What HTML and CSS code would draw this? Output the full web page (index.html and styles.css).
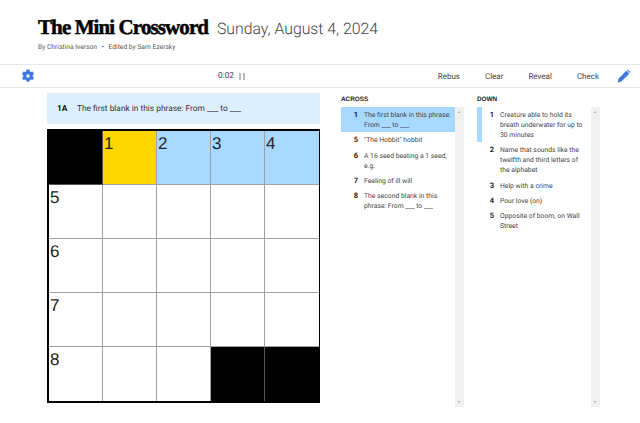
FILE: index.html
```html
<!DOCTYPE html>
<html lang="en">
<head>
    <meta charset="UTF-8">
    <title>The Mini Crossword</title>
    <link rel="stylesheet" href="styles.css">
</head>
<body>
    <header class="page-head">
        <div class="title-row">
            <h1>The Mini Crossword</h1>
            <span class="date">Sunday, August 4, 2024</span>
        </div>
        <div class="byline">By Christina Iverson <span class="dot">&bull;</span> Edited by Sam Ezersky</div>
    </header>

    <div class="toolbar">
        <svg class="gear" viewBox="0 0 24 24" width="14" height="14">
            <path fill="#3f78e0" fill-rule="evenodd" d="M9.500 1h5l.6 3.100 1.700 1 3-1 2.500 4.300-2.400 2.100v1.900l2.400 2.100-2.500 4.300-3-1-1.700 1-.6 3.100h-5l-.6-3.100-1.700-1-3 1L1.700 15.500l2.400-2.100v-1.900L1.700 8.400 4.200 4.100l3 1 1.700-1zM12 15a3 3 0 1 0 0-6 3 3 0 0 0 0 6z"/>
        </svg>
        <div class="timer">0:02 <span class="pause"></span></div>
        <nav class="tools">
            <a>Rebus</a>
            <a>Clear</a>
            <a>Reveal</a>
            <a>Check</a>
        </nav>
        <svg class="pencil" viewBox="0 0 24 24" width="14" height="14">
            <path fill="#3f78e0" d="M1 23l1.500-6.500L16 3l5 5L7.500 21.500zM17.500 1.500a1.500 1.500 0 0 1 2 0l3 3a1.500 1.500 0 0 1 0 2L22 7l-5-5z"/>
        </svg>
    </div>

    <main class="game">
        <section class="board">
            <div class="clue-bar"><b>1A</b><span>The first blank in this phrase: From ___ to ___</span></div>
            <div class="grid">
                <div class="cell black"></div>
                <div class="cell yellow">1</div>
                <div class="cell blue">2</div>
                <div class="cell blue">3</div>
                <div class="cell blue">4</div>
                <div class="cell">5</div>
                <div class="cell"></div>
                <div class="cell"></div>
                <div class="cell"></div>
                <div class="cell"></div>
                <div class="cell">6</div>
                <div class="cell"></div>
                <div class="cell"></div>
                <div class="cell"></div>
                <div class="cell"></div>
                <div class="cell">7</div>
                <div class="cell"></div>
                <div class="cell"></div>
                <div class="cell"></div>
                <div class="cell"></div>
                <div class="cell">8</div>
                <div class="cell"></div>
                <div class="cell"></div>
                <div class="cell black"></div>
                <div class="cell black"></div>
            </div>
        </section>

        <section class="clues">
            <h2>ACROSS</h2>
            <div class="clue-box">
                <ol class="clue-list">
                    <li class="active"><b>1</b><span>The first blank in this phrase: From ___ to ___</span></li>
                    <li><b>5</b><span>"The Hobbit" hobbit</span></li>
                    <li><b>6</b><span>A 16 seed beating a 1 seed, e.g.</span></li>
                    <li><b>7</b><span>Feeling of ill will</span></li>
                    <li><b>8</b><span>The second blank in this phrase: From ___ to ___</span></li>
                </ol>
                <div class="scrollbar"><i class="up"></i><i class="down"></i></div>
            </div>
        </section>

        <section class="clues">
            <h2>DOWN</h2>
            <div class="clue-box">
                <ol class="clue-list">
                    <li class="crossing"><b>1</b><span>Creature able to hold its breath underwater for up to 30 minutes</span></li>
                    <li><b>2</b><span>Name that sounds like the twelfth and third letters of the alphabet</span></li>
                    <li><b>3</b><span>Help with a crime</span></li>
                    <li><b>4</b><span>Pour love (on)</span></li>
                    <li><b>5</b><span>Opposite of boom, on Wall Street</span></li>
                </ol>
                <div class="scrollbar"><i class="up"></i><i class="down"></i></div>
            </div>
        </section>
    </main>
</body>
</html>
```

FILE: styles.css
```css
body {
    margin: 0;
    font-family: Roboto, sans-serif;
    color: #333;
    background: white;
    overflow: hidden;
    text-rendering: geometricPrecision;
}
.page-head {
    height: 64px;
    padding: 15px 0 0 38px;
    box-sizing: border-box;
}
.title-row {
    display: flex;
    align-items: baseline;
    height: 24px;
}
h1 {
    width: 179px;
    margin: 0;
    font-family: "Liberation Serif", serif;
    font-size: 21px;
    font-weight: bold;
    line-height: 24px;
    letter-spacing: -0.9px;
    white-space: nowrap;
    color: #000;
    -webkit-text-stroke: 0.5px #000;
}
.date {
    font-size: 15.8px;
    font-weight: 300;
    color: #444;
}
.byline {
    margin-top: 1px;
    font-size: 6.7px;
    line-height: 14px;
    color: #555;
}
.dot {
    margin: 0 3px;
    color: #333;
}
.toolbar {
    display: flex;
    align-items: center;
    height: 24px;
    box-sizing: border-box;
    border-top: 1px solid #e6e6e6;
    border-bottom: 1px solid #e6e6e6;
    padding: 0 9px 0 21px;
    font-size: 8px;
    color: #444;
}
.gear {
    display: block;
}
.timer {
    display: flex;
    align-items: center;
    gap: 5px;
    margin-left: 183px;
    font-size: 8.3px;
}
.pause {
    width: 6px;
    height: 7px;
    box-sizing: border-box;
    border-left: 2px solid #bbb;
    border-right: 2px solid #bbb;
}
.tools {
    display: flex;
    gap: 25px;
    margin-left: auto;
    margin-right: 18px;
}
.pencil {
    display: block;
}
.game {
    display: flex;
    padding: 5px 0 0 47px;
}
.board {
    width: 273px;
    margin-right: 21px;
}
.clue-bar {
    display: flex;
    align-items: center;
    height: 31px;
    margin-bottom: 5px;
    padding-left: 10px;
    background: #dcefff;
    font-size: 8.35px;
    color: #333;
}
.clue-bar b {
    width: 20px;
    color: #111;
}
.grid {
    display: grid;
    grid-template-columns: repeat(5, 54px);
    grid-template-rows: repeat(5, 54px);
    box-sizing: border-box;
    width: 273px;
    height: 274px;
    border: 2px solid #000;
    border-right-width: 1px;
}
.cell {
    box-sizing: border-box;
    padding: 2.5px 0 0 1px;
    border-right: 1px solid #a0a0a0;
    border-bottom: 1px solid #a0a0a0;
    font-family: "Liberation Sans", sans-serif;
    font-size: 17px;
    line-height: 20px;
    color: #222;
}
.cell:nth-child(5n) {
    border-right: none;
}
.cell:nth-child(n+21) {
    border-bottom: none;
}
.black {
    background: #000;
    border-color: #555;
}
.yellow {
    background: #ffd700;
}
.blue {
    background: #a7d8ff;
}
.clues {
    width: 123px;
    margin-right: 13px;
}
.clues h2 {
    margin: 0;
    font-family: "Liberation Sans", sans-serif;
    font-size: 6.4px;
    line-height: 14px;
    color: #222;
}
.clue-box {
    display: flex;
    height: 300px;
}
.clue-list {
    flex: 1;
    margin: 0;
    padding: 0;
    list-style: none;
    font-size: 6.8px;
    line-height: 10px;
    color: #444;
}
.clue-list li {
    display: flex;
    padding: 3px 4px 2.3px 0;
    border-left: 5px solid transparent;
}
.clue-list b {
    flex-shrink: 0;
    width: 12px;
    margin-right: 6px;
    text-align: right;
    font-size: 7.5px;
    color: #222;
}
.clue-list .active {
    background: #a7d8ff;
}
.clue-list .crossing {
    border-left-color: #a7d8ff;
}
.scrollbar {
    position: relative;
    width: 9px;
    background: #f1f1f1;
}
.scrollbar i {
    position: absolute;
    left: 3px;
    border-left: 1.5px solid transparent;
    border-right: 1.5px solid transparent;
}
.up {
    top: 4px;
    border-bottom: 2px solid #999;
}
.down {
    bottom: 4px;
    border-top: 2px solid #999;
}
```
